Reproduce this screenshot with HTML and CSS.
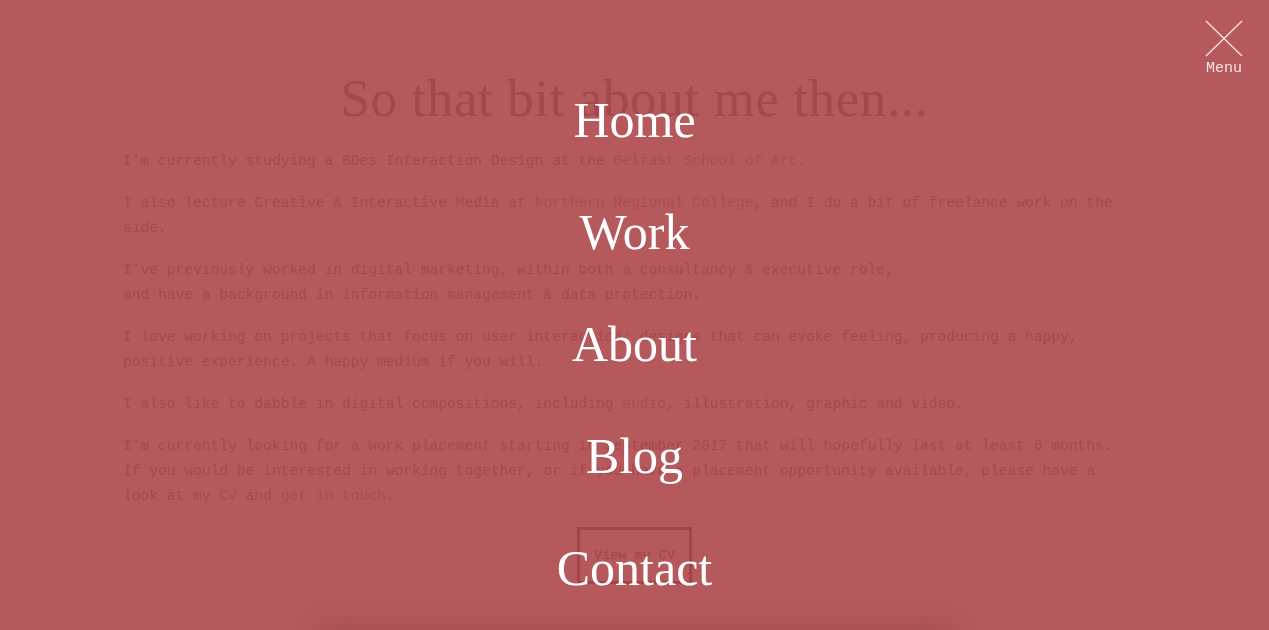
FILE: index.html
```html
<!DOCTYPE html>
<html lang="en">
<head>
<meta charset="utf-8">
<title>About</title>
<link rel="stylesheet" href="styles.css">
</head>
<body>
<main class="page">
  <h1 class="title">So that bit about me then...</h1>
  <p>I'm currently studying a BDes Interaction Design at the <a href="#">Belfast School of Art</a>.</p>
  <p>I also lecture Creative &amp; Interactive Media at <a href="#">Northern Regional College</a>, and I do a bit of freelance work on the side.</p>
  <p>I've previously worked in digital marketing, within both a consultancy &amp; executive role,<br>and have a background in information management &amp; data protection.</p>
  <p>I love working on projects that focus on user interaction; designs that can evoke feeling, producing a happy, positive experience. A happy medium if you will.</p>
  <p>I also like to dabble in digital compositions, including <a href="#">audio</a>, illustration, graphic and video.</p>
  <p>I'm currently looking for a work placement starting in September 2017 that will hopefully last at least 6 months.<br>If you would be interested in working together, or if you have a placement opportunity available, please have a look at my <a href="#">CV</a> and <a href="#">get in touch</a>.</p>
  <div class="cta"><a class="button" href="#">View my CV</a></div>
  <div class="card"></div>
</main>

<nav class="overlay">
  <a href="#">Home</a>
  <a href="#">Work</a>
  <a href="#">About</a>
  <a href="#">Blog</a>
  <a href="#">Contact</a>
</nav>

<button class="menu-toggle" type="button">
  <svg width="38" height="37" viewBox="0 0 38 37" aria-hidden="true">
    <line x1="1" y1="1" x2="37" y2="36" />
    <line x1="37" y1="1" x2="1" y2="36" />
  </svg>
  <span>Menu</span>
</button>
</body>
</html>
```

FILE: styles.css
```css
html, body {
  margin: 0;
  height: 100%;
  overflow: hidden;
}

body {
  background: #b5595d;
  font-family: "Liberation Mono", "DejaVu Sans Mono", monospace;
  color: #a54a4f;
}

.page {
  width: 1023px;
  margin: 0 auto;
  padding-top: 68px;
  font-size: 14.6px;
  line-height: 25px;
}

.title {
  margin: 0 0 21px;
  text-align: center;
  font-family: "Liberation Serif", serif;
  font-weight: normal;
  font-size: 53px;
  line-height: 60px;
  color: #a4484d;
  letter-spacing: 0.6px;
}

.page p {
  margin: 0 0 17px;
  padding-right: 20px;
}

.page a {
  color: #ae4c53;
  text-decoration: none;
}

.cta {
  display: flex;
  justify-content: center;
  padding-top: 1px;
}

.page .button {
  display: block;
  padding: 13px 14px;
  border: 3px solid #9f4549;
  color: #a0464a;
  font-size: 13.5px;
}

.card {
  width: 640px;
  height: 60px;
  margin: 47px auto 0;
  box-shadow: 0 -6px 30px rgba(120, 40, 45, 0.22);
}

.overlay {
  position: fixed;
  inset: 0;
  display: flex;
  flex-direction: column;
  align-items: center;
  padding-top: 90px;
  gap: 52px;
}

.overlay a {
  font-family: "Liberation Serif", serif;
  font-size: 50px;
  line-height: 60px;
  color: #ffffff;
  text-decoration: none;
}

.menu-toggle {
  position: fixed;
  top: 20px;
  right: 26px;
  display: flex;
  flex-direction: column;
  align-items: center;
  gap: 3px;
  padding: 0;
  border: 0;
  background: none;
  color: #f6e4e4;
  font-family: "Liberation Mono", monospace;
  font-size: 15px;
}

.menu-toggle svg line {
  stroke: #f3d9d9;
  stroke-width: 1.6;
}
```
